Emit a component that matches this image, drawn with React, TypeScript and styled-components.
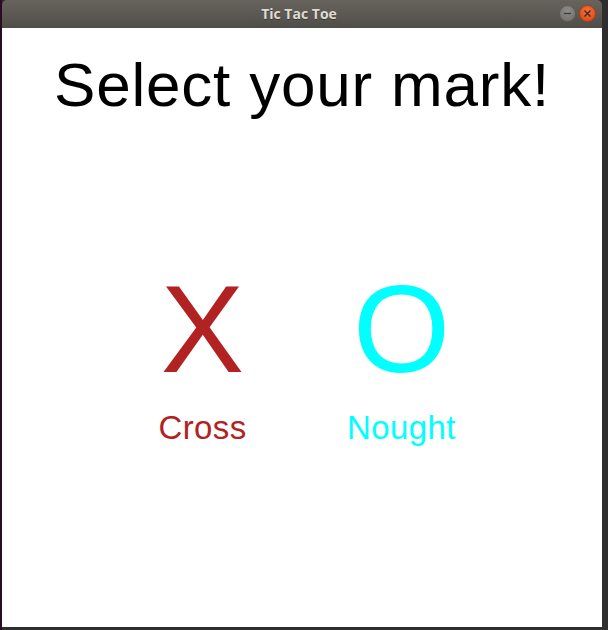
import React from 'react';
import styled, { createGlobalStyle } from 'styled-components';

const Global = createGlobalStyle`
  html, body {
    margin: 0;
    padding: 0;
    background: #2e2e2e;
  }
  body {
    font-family: "Liberation Sans", Arial, sans-serif;
  }
`;

const Desktop = styled.div`
  display: flex;
  width: 608px;
  height: 630px;
  overflow: hidden;
  background: #2e2e2e;
`;

const TerminalEdge = styled.div`
  width: 2px;
  flex-shrink: 0;
  background: #2c0b24;
`;

const Window = styled.div`
  width: 600px;
  flex-shrink: 0;
  display: flex;
  flex-direction: column;
  height: 627px;
`;

const TitleBar = styled.div`
  height: 28px;
  flex-shrink: 0;
  border-radius: 5px 5px 0 0;
  background: linear-gradient(180deg, #67645d 0%, #5b5852 55%, #4f4d48 100%);
  display: grid;
  grid-template-columns: 1fr auto 1fr;
  align-items: center;
  padding: 0 6px 0 0;
`;

const TitleText = styled.div`
  grid-column: 2;
  font-family: "Open Sans", "DejaVu Sans", sans-serif;
  font-weight: 700;
  font-size: 14px;
  color: #dfdbd2;
  text-shadow: 0 1px 0 rgba(0, 0, 0, 0.35);
  margin-top: -1px;
`;

const Controls = styled.div`
  grid-column: 3;
  justify-self: end;
  display: flex;
  gap: 3px;
  align-items: center;
  margin-top: -2px;
`;

const WinBtn = styled.div<{ $close?: boolean }>`
  width: 17px;
  height: 17px;
  border-radius: 50%;
  display: flex;
  align-items: center;
  justify-content: center;
  box-sizing: border-box;
  border: 1px solid ${({ $close }) => ($close ? '#b23c14' : '#5e5c58')};
  background: ${({ $close }) =>
    $close
      ? 'radial-gradient(circle at 50% 35%, #f4713f 0%, #e35623 60%, #cf4516 100%)'
      : 'radial-gradient(circle at 50% 35%, #8f8d88 0%, #7b7975 60%, #6c6a66 100%)'};
`;

const Content = styled.main`
  flex: 1;
  background: #ffffff;
  display: flex;
  flex-direction: column;
  align-items: center;
`;

const Heading = styled.h1`
  margin: 26px 0 0;
  font-family: "Liberation Sans", Arial, sans-serif;
  font-weight: 400;
  font-size: 62px;
  letter-spacing: 0.8px;
  line-height: 1;
  color: #000;
`;

const Choices = styled.div`
  display: flex;
  margin-top: 150px;
`;

const Choice = styled.button<{ $color: string }>`
  width: 199px;
  display: flex;
  flex-direction: column;
  align-items: center;
  gap: 20px;
  background: none;
  border: none;
  padding: 0;
  cursor: pointer;
  color: ${({ $color }) => $color};
  font-family: "Liberation Sans", Arial, sans-serif;
`;

const Mark = styled.span`
  font-size: 125px;
  line-height: 1;
`;

const Label = styled.span`
  font-size: 33px;
  letter-spacing: 0.4px;
  line-height: 1;
`;

export default function App() {
  return (
    <>
      <Global />
      <Desktop>
        <TerminalEdge />
        <Window>
          <TitleBar>
            <TitleText>Tic Tac Toe</TitleText>
            <Controls>
              <WinBtn>
                <svg width="9" height="9" viewBox="0 0 9 9">
                  <path d="M1 4.5h7" stroke="#3d3b37" strokeWidth="1.3" />
                </svg>
              </WinBtn>
              <WinBtn $close>
                <svg width="9" height="9" viewBox="0 0 9 9">
                  <path d="M1.5 1.5l6 6M7.5 1.5l-6 6" stroke="#3b2a1f" strokeWidth="1.3" />
                </svg>
              </WinBtn>
            </Controls>
          </TitleBar>
          <Content>
            <Heading>Select your mark!</Heading>
            <Choices>
              <Choice $color="#b22222">
                <Mark>X</Mark>
                <Label>Cross</Label>
              </Choice>
              <Choice $color="#00ffff">
                <Mark>O</Mark>
                <Label>Nought</Label>
              </Choice>
            </Choices>
          </Content>
        </Window>
      </Desktop>
    </>
  );
}
